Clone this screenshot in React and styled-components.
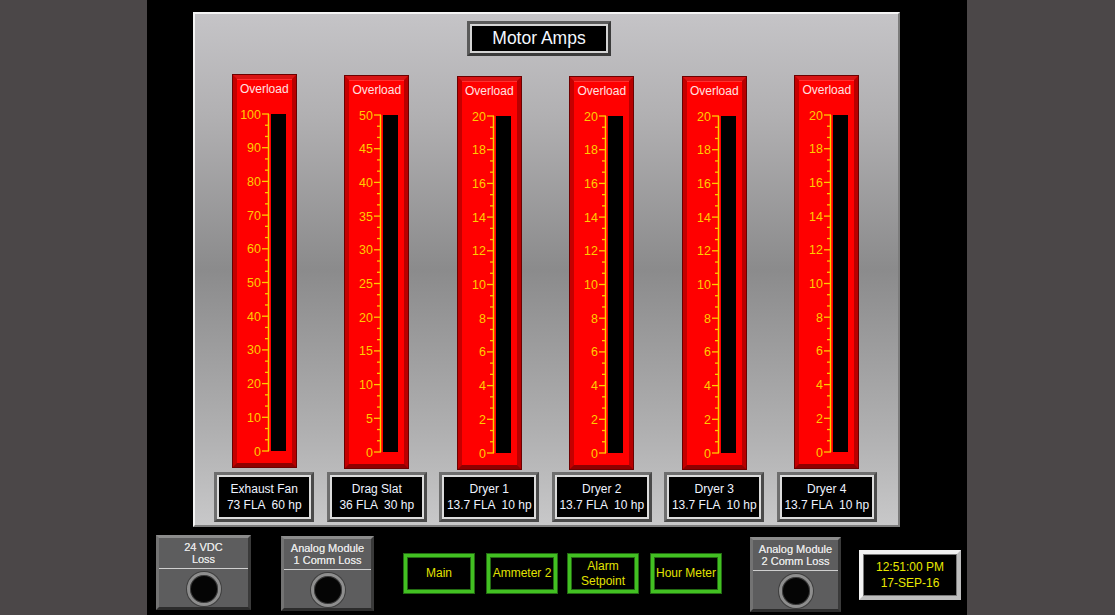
import styled, { createGlobalStyle } from 'styled-components';

const GlobalStyle = createGlobalStyle`
  html, body {
    margin: 0;
    padding: 0;
    background: #4b4748;
    font-family: "Liberation Sans", Arial, sans-serif;
  }
`;

const Page = styled.div`
  width: 1115px;
  height: 615px;
  display: flex;
  background: #4b4748;
`;

const Screen = styled.div`
  width: 820px;
  height: 615px;
  margin-left: 147px;
  background: #000;
  display: flex;
  flex-direction: column;
`;

const Panel = styled.div`
  box-sizing: border-box;
  width: 707px;
  height: 515px;
  margin: 12px 0 0 46px;
  border: 2px solid;
  border-color: #f4f4f4 #7c7c7c #7c7c7c #f4f4f4;
  background: linear-gradient(
    to bottom,
    #c5c4c7 0%,
    #b1b0b2 20%,
    #8b8b8c 50%,
    #b0b0b1 82%,
    #c8c8c9 100%
  );
  display: flex;
  flex-direction: column;
`;

const Title = styled.div`
  box-sizing: border-box;
  width: 144px;
  height: 35px;
  margin: 7px 0 0 272px;
  border: 3px solid;
  border-color: #5a5a5a #3a3a3a #3a3a3a #5a5a5a;
  box-shadow: inset 0 0 0 2px #d4d4d4;
  background: #000;
  color: #f4f8ff;
  font-size: 17.5px;
  display: flex;
  align-items: center;
  justify-content: center;
`;

const GaugeRow = styled.div`
  display: grid;
  grid-template-columns: repeat(6, 112.5px);
  padding-left: 13px;
  margin-top: 19px;
`;

const Column = styled.div`
  display: flex;
  flex-direction: column;
  align-items: center;
`;

const Gauge = styled.div`
  box-sizing: border-box;
  width: 63px;
  height: 392px;
  margin-top: ${(p) => p.$drop || 0}px;
  margin-bottom: ${(p) => 5 - (p.$drop || 0)}px;
  background: #ff0000;
  border: 4px solid;
  border-color: #d81414 #b80000 #900000 #c40000;
  box-shadow: 0 0 0 1px #6c0000, inset 0 1px 0 #ff3030;
  display: flex;
  flex-direction: column;
`;

const GaugeHead = styled.div`
  height: 20px;
  line-height: 20px;
  text-align: center;
  color: #ffe2e2;
  font-size: 12px;
`;

const GaugeBody = styled.div`
  display: flex;
  margin-top: 9px;
  margin-left: -1px;
`;

const Bar = styled.div`
  width: 15px;
  height: 337px;
  margin: 6px 0 0 1px;
  background: #000;
`;

const NameBox = styled.div`
  box-sizing: border-box;
  width: 100px;
  height: 50px;
  border: 3px solid;
  border-color: #6e6e6e #4a4a4a #4a4a4a #6e6e6e;
  box-shadow: inset 0 0 0 2px #dcdcdc;
  background: #000;
  color: #eef3ff;
  font-size: 12px;
  line-height: 16px;
  display: flex;
  flex-direction: column;
  align-items: center;
  justify-content: center;
  white-space: pre;
`;

const BottomBar = styled.div`
  display: flex;
  align-items: flex-start;
  padding: 8px 0 0 9px;
`;

const AlarmTile = styled.div`
  box-sizing: border-box;
  width: ${(p) => p.$w}px;
  height: 75px;
  margin-left: ${(p) => p.$ml || 0}px;
  margin-top: ${(p) => p.$mt || 0}px;
  background: #5d5d5e;
  border: 3px solid;
  border-color: #8c8c8c #3a3a3a #2c2c2c #737373;
  display: flex;
  flex-direction: column;
  align-items: center;
  padding-top: 3px;
`;

const TileText = styled.div`
  color: #e4e4e4;
  font-size: 11px;
  line-height: 12px;
  text-align: center;
  width: 100%;
  padding-bottom: 3px;
  border-bottom: 1px solid #cfcfcf;
  margin: 0 5px;
  box-sizing: border-box;
  text-shadow: 0 0 0.4px #e4e4e4;
`;

const Lamp = styled.div`
  box-sizing: border-box;
  width: 34px;
  height: 34px;
  margin-top: 3px;
  border-radius: 50%;
  background: #050505;
  border: 3px solid #8e8e8e;
  box-shadow: inset 0 0 0 1px #3a3a3a, 0 0 0 1px #3e3e3e;
`;

const NavButton = styled.div`
  box-sizing: border-box;
  width: 70px;
  height: 39px;
  margin-left: ${(p) => p.$ml}px;
  margin-top: 19px;
  border: 3px solid #42c022;
  box-shadow: 0 0 0 1px #236b12, inset 0 0 0 1px #236b12;
  background: #000;
  color: #e2e200;
  font-size: 12px;
  line-height: 15px;
  text-align: center;
  display: flex;
  align-items: center;
  justify-content: center;
  white-space: nowrap;
`;

const Clock = styled.div`
  box-sizing: border-box;
  width: 102px;
  height: 50px;
  margin-left: 18px;
  margin-top: 15px;
  border: 4px solid;
  border-color: #f2f2f2 #bdbdbd #bdbdbd #f2f2f2;
  box-shadow: inset 0 0 0 1px #7a7a7a;
  background: #000;
  color: #e8e800;
  font-size: 12px;
  line-height: 16px;
  display: flex;
  flex-direction: column;
  align-items: center;
  justify-content: center;
`;

const gauges = [
  { max: 100, name: 'Exhaust Fan', spec: '73 FLA  60 hp', drop: 0 },
  { max: 50, name: 'Drag Slat', spec: '36 FLA  30 hp', drop: 1 },
  { max: 20, name: 'Dryer 1', spec: '13.7 FLA  10 hp', drop: 2 },
  { max: 20, name: 'Dryer 2', spec: '13.7 FLA  10 hp', drop: 2 },
  { max: 20, name: 'Dryer 3', spec: '13.7 FLA  10 hp', drop: 2 },
  { max: 20, name: 'Dryer 4', spec: '13.7 FLA  10 hp', drop: 1 },
];

const Scale = ({ max }) => {
  const top = 6;
  const span = 337;
  const major = span / 10;
  const ticks = [];
  for (let i = 0; i <= 30; i++) {
    const y = top + (span * i) / 30;
    const isMajor = i % 3 === 0;
    ticks.push(
      <line
        key={i}
        x1={isMajor ? 26 : 29}
        x2={33}
        y1={y}
        y2={y}
        stroke="#ffcc00"
        strokeWidth="1.3"
      />
    );
  }
  const labels = [];
  for (let i = 0; i <= 10; i++) {
    labels.push(
      <text
        key={i}
        x="25"
        y={top + major * i + 4.5}
        textAnchor="end"
        fontSize="12.5"
        fill="#ffcc00"
        fontFamily="Liberation Sans, Arial, sans-serif"
      >
        {Math.round(max - (max / 10) * i)}
      </text>
    );
  }
  return (
    <svg width="34" height="349" viewBox="0 0 34 349">
      <line x1="32.5" x2="32.5" y1={top} y2={top + span} stroke="#ffcc00" strokeWidth="1.5" />
      {ticks}
      {labels}
    </svg>
  );
};

const App = () => (
  <>
    <GlobalStyle />
    <Page>
      <Screen>
        <Panel>
          <Title>Motor Amps</Title>
          <GaugeRow>
            {gauges.map((g) => (
              <Column key={g.name}>
                <Gauge $drop={g.drop}>
                  <GaugeHead>Overload</GaugeHead>
                  <GaugeBody>
                    <Scale max={g.max} />
                    <Bar />
                  </GaugeBody>
                </Gauge>
                <NameBox>
                  <span>{g.name}</span>
                  <span>{g.spec}</span>
                </NameBox>
              </Column>
            ))}
          </GaugeRow>
        </Panel>
        <BottomBar>
          <AlarmTile $w={95}>
            <TileText>
              24 VDC
              <br />
              Loss
            </TileText>
            <Lamp />
          </AlarmTile>
          <AlarmTile $w={93} $ml={30} $mt={1}>
            <TileText>
              Analog Module
              <br />1 Comm Loss
            </TileText>
            <Lamp />
          </AlarmTile>
          <NavButton $ml={30}>Main</NavButton>
          <NavButton $ml={13}>Ammeter 2</NavButton>
          <NavButton $ml={11}>
            Alarm
            <br />
            Setpoint
          </NavButton>
          <NavButton $ml={13}>Hour Meter</NavButton>
          <AlarmTile $w={91} $ml={29} $mt={2}>
            <TileText>
              Analog Module
              <br />2 Comm Loss
            </TileText>
            <Lamp />
          </AlarmTile>
          <Clock>
            <span>12:51:00 PM</span>
            <span>17-SEP-16</span>
          </Clock>
        </BottomBar>
      </Screen>
    </Page>
  </>
);

export default App;
